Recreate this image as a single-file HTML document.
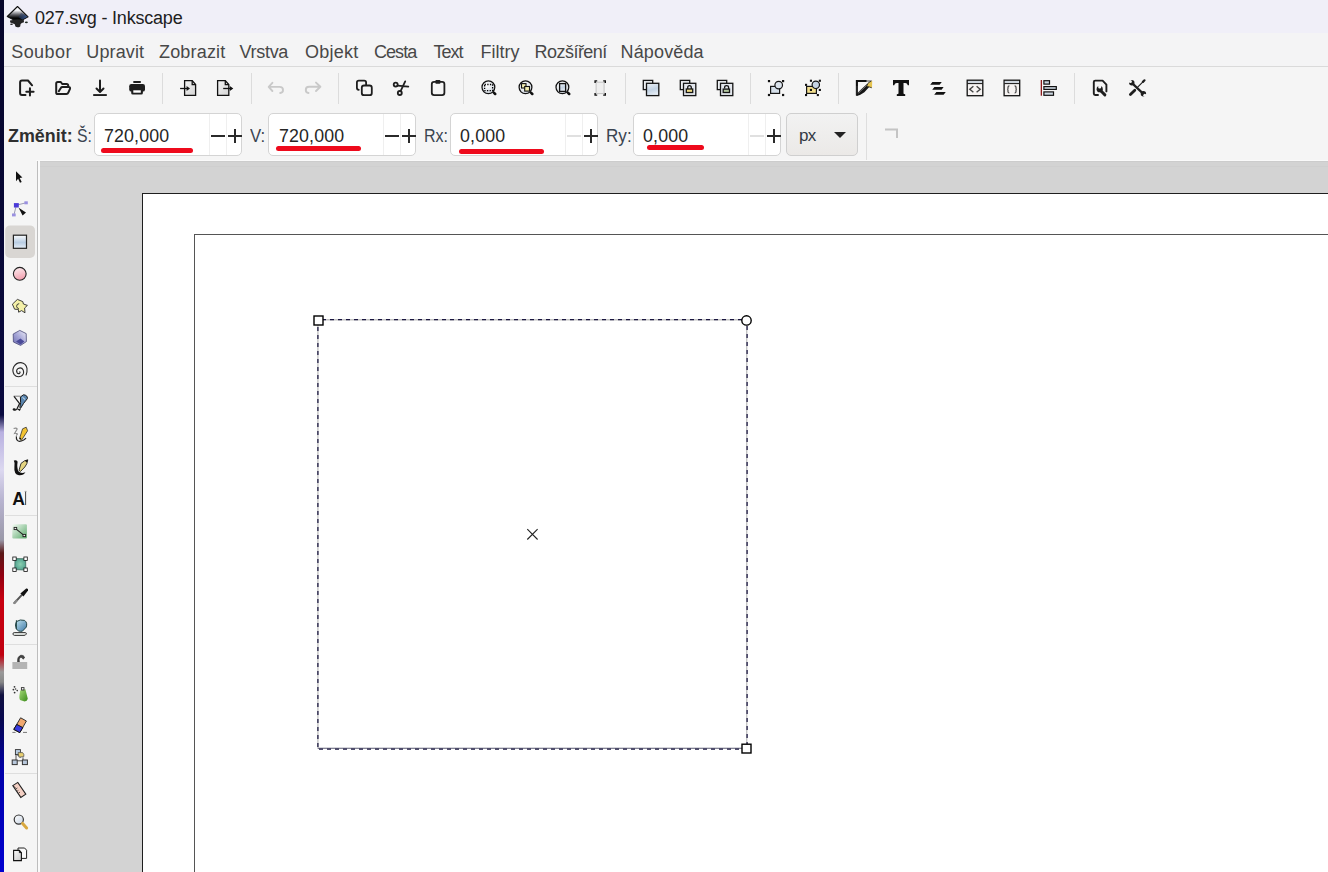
<!DOCTYPE html>
<html><head><meta charset="utf-8">
<style>
*{margin:0;padding:0;box-sizing:border-box}
html,body{width:1328px;height:872px;overflow:hidden;background:#f5f5f5;font-family:"Liberation Sans",sans-serif}
.a{position:absolute}
.t{position:absolute;white-space:nowrap;line-height:1}
svg{position:absolute;overflow:visible}
.ent{width:148px;height:43px;border:1px solid #d4d4d4;border-radius:5px;background:#fff}
.ent .s1{position:absolute;left:114px;top:0;width:1px;height:41px;background:#efefef}
.ent .s2{position:absolute;left:131px;top:0;width:1px;height:41px;background:#efefef}
.ent .mi{position:absolute;left:116px;top:21px;width:14px;height:1.7px;background:#2a2a2a}
.ent .mi.dis{background:#e0e0e0}
.ent .pl{position:absolute;left:133px;top:21px;width:14px;height:1.7px;background:#2a2a2a}
.ent .pl2{position:absolute;left:139.2px;top:14.8px;width:1.7px;height:14px;background:#2a2a2a}
.num{font-size:17.8px;color:#262626;letter-spacing:0.15px}
.red{height:5px;border-radius:3px;background:#ee0a1c}
</style></head><body>
<!-- desktop strip -->
<div class="a" style="left:0;top:0;width:4px;height:872px;background:linear-gradient(#06062a 0px,#0a0a40 415px,#b8b0e0 432px,#dcd8f0 470px,#b8b4d0 500px,#9a98a8 540px,#5a1818 553px,#900010 575px,#c80010 600px,#c00010 655px,#9a9a9a 672px,#888 682px,#101040 695px,#080850 720px,#0000a8 770px,#0000d0 872px)"></div>
<!-- title bar -->
<div class="a" style="left:4px;top:0;width:1324px;height:33px;background:#f0eff8"></div>
<div class="a" style="left:4px;top:33px;width:1324px;height:33px;background:#f4f4f5"></div>
<div class="a" style="left:4px;top:66px;width:1324px;height:1px;background:#dadada"></div>
<div class="t" style="left:35px;top:8.5px;font-size:18px;letter-spacing:-0.2px;color:#202020">027.svg - Inkscape</div>
<!-- menu -->
<div id="menu" style="color:#484848;font-size:18px">
<div class="t" style="left:11.2px;top:43px;letter-spacing:0.45px">Soubor</div>
<div class="t" style="left:86.3px;top:43px;letter-spacing:0.13px">Upravit</div>
<div class="t" style="left:159.0px;top:43px;letter-spacing:0.18px">Zobrazit</div>
<div class="t" style="left:239.6px;top:43px;letter-spacing:-0.32px">Vrstva</div>
<div class="t" style="left:305.0px;top:43px;letter-spacing:0.26px">Objekt</div>
<div class="t" style="left:373.9px;top:43px;letter-spacing:-0.92px">Cesta</div>
<div class="t" style="left:433.5px;top:43px;letter-spacing:-1.04px">Text</div>
<div class="t" style="left:480.4px;top:43px;letter-spacing:0.01px">Filtry</div>
<div class="t" style="left:534.6px;top:43px;letter-spacing:-0.54px">Rozšíření</div>
<div class="t" style="left:620.5px;top:43px;letter-spacing:0.15px">Nápověda</div>
</div>
<!-- toolbar separators row1 -->
<div class="a" style="left:162px;top:73px;width:1px;height:31px;background:#dcdcdc"></div>
<div class="a" style="left:251px;top:73px;width:1px;height:31px;background:#dcdcdc"></div>
<div class="a" style="left:338px;top:73px;width:1px;height:31px;background:#dcdcdc"></div>
<div class="a" style="left:463px;top:73px;width:1px;height:31px;background:#dcdcdc"></div>
<div class="a" style="left:625px;top:73px;width:1px;height:31px;background:#dcdcdc"></div>
<div class="a" style="left:750px;top:73px;width:1px;height:31px;background:#dcdcdc"></div>
<div class="a" style="left:838px;top:73px;width:1px;height:31px;background:#dcdcdc"></div>
<div class="a" style="left:1074px;top:73px;width:1px;height:31px;background:#dcdcdc"></div>

<!-- row 2 -->
<div class="t" style="left:8px;top:128px;font-size:17.9px;font-weight:bold;color:#2f2f2f">Změnit:</div>
<div class="t" style="left:77px;top:127px;font-size:18px;transform:scaleX(0.88);transform-origin:0 0;color:#3a4450">Š:</div>
<div class="t" style="left:250px;top:127px;font-size:18px;transform:scaleX(0.93);transform-origin:0 0;color:#3a4450">V:</div>
<div class="t" style="left:424px;top:127px;font-size:18px;transform:scaleX(0.89);transform-origin:0 0;color:#3a4450">Rx:</div>
<div class="t" style="left:606px;top:127px;font-size:18px;transform:scaleX(0.95);transform-origin:0 0;color:#3a4450">Ry:</div>
<div class="a ent" style="left:94px;top:113px"><div class="s1"></div><div class="s2"></div><div class="mi"></div><div class="pl"></div><div class="pl2"></div></div>
<div class="a ent" style="left:268px;top:113px"><div class="s1"></div><div class="s2"></div><div class="mi"></div><div class="pl"></div><div class="pl2"></div></div>
<div class="a ent" style="left:450px;top:113px"><div class="s1"></div><div class="s2"></div><div class="mi dis"></div><div class="pl"></div><div class="pl2"></div></div>
<div class="a ent" style="left:633px;top:113px"><div class="s1"></div><div class="s2"></div><div class="mi dis"></div><div class="pl"></div><div class="pl2"></div></div>
<div class="t num" style="left:104px;top:128px">720,000</div>
<div class="t num" style="left:279px;top:128px">720,000</div>
<div class="t num" style="left:460px;top:128px">0,000</div>
<div class="t num" style="left:643px;top:128px">0,000</div>
<div class="a red" style="left:101px;top:148px;width:92px"></div>
<div class="a red" style="left:276px;top:146px;width:85px"></div>
<div class="a red" style="left:459px;top:149px;width:85px"></div>
<div class="a red" style="left:647px;top:145px;width:57px"></div>
<div class="a" style="left:786px;top:113px;width:72px;height:43px;border:1px solid #cfcfcf;border-radius:5px;background:linear-gradient(#f2f2f2,#ebe9e7)"></div>
<div class="t" style="left:799px;top:127px;font-size:17px;letter-spacing:-0.6px;color:#333a44">px</div>
<svg style="left:834px;top:132px" width="12" height="7"><path d="M0 0H12L6 6Z" fill="#222"/></svg>
<div class="a" style="left:866px;top:113px;width:1px;height:47px;background:#dedede"></div>
<svg style="left:884px;top:128px" width="14" height="11"><path d="M1 1.5H13V10" fill="none" stroke="#c4c4c4" stroke-width="2"/></svg>
<!-- canvas -->
<div class="a" style="left:36px;top:160px;width:1292px;height:712px;background:#fafafa"></div>
<div class="a" style="left:4px;top:161px;width:33px;height:711px;background:#f5f5f5"></div>
<div class="a" style="left:37px;top:161px;width:1px;height:711px;background:#bdbdbd"></div>
<div class="a" style="left:40px;top:161px;width:1288px;height:711px;background:#d3d3d3"></div>
<div class="a" style="left:40px;top:161px;width:1288px;height:1px;background:#cccccc"></div>
<div class="a" style="left:40px;top:166px;width:1288px;height:1px;background:#cfcfcf"></div>
<div class="a" style="left:142px;top:193px;width:1200px;height:700px;background:#fff;border-left:1px solid #1e1e1e;border-top:1px solid #1e1e1e"></div>
<div class="a" style="left:194px;top:234px;width:1200px;height:700px;border-left:1px solid #555;border-top:1px solid #555"></div>

<svg class="a" style="left:0;top:0" width="1328" height="872" viewBox="0 0 1328 872">
<path d="M318 319.7 H747" stroke="#c4c4c4" stroke-width="1.5"/>
<path d="M317.9 320 V749" stroke="#c4c4c4" stroke-width="1.4"/>
<path d="M746.7 320 V749" stroke="#c4c4c4" stroke-width="1.4"/>
<path d="M318 748.3 H747" stroke="#5a5a70" stroke-width="1.1"/>
<g stroke="#1a1640" stroke-width="1.25" stroke-dasharray="4 4">
<path d="M314 319.5 H747"/>
<path d="M317.9 319 V749"/>
<path d="M747.1 318 V749"/>
<path d="M319 749.1 H747"/>
</g>
<rect x="314" y="316" width="9" height="9" fill="#fff" stroke="#000" stroke-width="1.4"/>
<rect x="742" y="744.2" width="9" height="8.8" fill="#fff" stroke="#000" stroke-width="1.4"/>
<circle cx="746.5" cy="320.45" r="4.7" fill="#fff" stroke="#000" stroke-width="1.4"/>
<path d="M527.3 529.2 L537.6 539.5 M537.6 529.2 L527.3 539.5" stroke="#222" stroke-width="1.1"/>
</svg>
<svg class="a" style="left:0;top:0" width="1328" height="872" viewBox="0 0 1328 872">
<defs>
<linearGradient id="gdoc" x1="0" y1="0" x2="1" y2="1"><stop offset="0" stop-color="#f4f4f4"/><stop offset="1" stop-color="#d4d4d4"/></linearGradient>
<linearGradient id="gblue" x1="0" y1="0" x2="0.3" y2="1"><stop offset="0" stop-color="#eef2f6"/><stop offset="0.6" stop-color="#c3d3e4"/><stop offset="1" stop-color="#e4ecf4"/></linearGradient>
<radialGradient id="glens" cx="0.4" cy="0.35" r="0.7"><stop offset="0" stop-color="#ffffff"/><stop offset="1" stop-color="#cfd6de"/></radialGradient>
<linearGradient id="gpink" x1="0" y1="0" x2="0.4" y2="1"><stop offset="0" stop-color="#fde8ec"/><stop offset="1" stop-color="#f3a9b6"/></linearGradient>
<linearGradient id="glogo" x1="0" y1="0" x2="0" y2="1"><stop offset="0" stop-color="#ffffff"/><stop offset="0.3" stop-color="#f0f0f4"/><stop offset="0.62" stop-color="#5a5a60"/><stop offset="0.85" stop-color="#050505"/><stop offset="1" stop-color="#000"/></linearGradient>
<linearGradient id="gblu" x1="0" y1="0" x2="1" y2="0.6"><stop offset="0" stop-color="#1a2a4a" stop-opacity="0.2"/><stop offset="1" stop-color="#3a5c9a"/></linearGradient>
</defs>
<!-- inkscape logo -->
<path d="M17.5 6.5 L28.1 16.8 L22.2 20 L13 19.4 L7.3 16.5 Z" fill="url(#glogo)" stroke="#101010" stroke-width="1.1" stroke-linejoin="round"/>
<path d="M21 12.4 L27.6 16.8 L22.2 19.6 L18.5 17.2 Z" fill="url(#gblu)"/>
<path d="M10 20.4 Q14 19.2 23.8 20 L24 22.2 Q21.4 22.6 20.6 24 L20.2 26.4 Q17.6 28 15.4 26.6 L14.8 24.2 Q12.4 23.4 10.2 22.6 Z" fill="#232323"/>
<ellipse cx="11.5" cy="24.3" rx="1.4" ry="0.8" fill="#222"/>
<ellipse cx="26.4" cy="22.3" rx="1.5" ry="0.9" fill="#1e2a22"/>
<!-- 1 new -->
<g fill="none" stroke="#1e1e1e" stroke-width="2" stroke-linecap="round" stroke-linejoin="round">
<path d="M25.5 95 H22 Q20.1 95 20.1 93 V82.5 Q20.1 80.5 22 80.5 H28 L32.1 85.3"/>
<path d="M26.3 91.8 H33.6 M29.95 88.2 V95.6"/>
<!-- 2 open -->
<path d="M68.2 86.8 V85.6 Q68.2 84 66.6 84 H62.2 L60.8 82 H57.8 Q56.2 82 56.2 83.6 V92.4 Q56.2 94 57.8 94 H66.4 Q67.8 94 68.3 92.7 L70 88.9 Q70.4 87 68.8 87 H62.4 Q61.3 87 60.8 87.9 L58.8 91.2"/>
<!-- 3 download -->
<path d="M100 80.5 V91.4 M96.5 88.5 L100 92 L103.5 88.5"/>
</g>
<rect x="93.2" y="94.1" width="13.6" height="1.9" fill="#1e1e1e"/>
<!-- 4 print -->
<g fill="#1e1e1e">
<rect x="133.2" y="81" width="7.7" height="1.9" rx="0.6"/>
<rect x="129.2" y="84" width="15.8" height="7.6" rx="2.2"/>
<rect x="131.2" y="88.5" width="11.7" height="6.1" rx="1.6"/>
</g>
<rect x="133.3" y="90.3" width="7.5" height="2.4" fill="#fff"/>
<!-- 5 import / 6 export -->
<g stroke="#111" stroke-width="1.3" stroke-linejoin="miter">
<path d="M184.6 80.6 H192.2 L195.6 84.6 V95.4 H184.6 Z" fill="url(#gdoc)"/>
<path d="M192.2 80.6 V84.6 H195.6" fill="none"/>
<path d="M180.1 88.5 H187.2" fill="none"/>
<path d="M217.6 80.6 H225.3 L228.8 84.6 V95.4 H217.6 Z" fill="url(#gdoc)"/>
<path d="M225.3 80.6 V84.6 H228.8" fill="none"/>
<path d="M223.2 88.5 H230.2" fill="none"/>
</g>
<path d="M186.6 85.9 L190 88.5 L186.6 91.1 Z M229.8 85.9 L233.3 88.5 L229.8 91.1 Z" fill="#111"/>
<!-- 7 undo / 8 redo -->
<g fill="none" stroke="#c9c9c9" stroke-width="1.9" stroke-linecap="round" stroke-linejoin="round">
<path d="M272.4 82.8 L268.7 86.9 L272.4 91 M268.7 86.9 H279.6 Q283 86.9 283 90 Q283 92.8 280.2 93"/>
<path d="M316 82.6 L320.4 86.8 L316 91 M320.4 86.8 H309 Q305.8 86.8 305.8 90 Q305.8 92.8 308.5 93"/>
</g>
<!-- 9 copy, 10 cut, 11 paste -->
<g fill="none" stroke="#1e1e1e" stroke-width="1.8" stroke-linecap="round" stroke-linejoin="round">
<path d="M358.8 89.8 Q356.9 89.8 356.9 87.8 V82.5 Q356.9 80.6 358.8 80.6 H364.2 Q366.1 80.6 366.1 82.5 V85"/>
<rect x="361.8" y="85.5" width="10" height="9.7" rx="2.3"/>
<circle cx="395.7" cy="84.6" r="2"/>
<circle cx="399.8" cy="93" r="2"/>
<path d="M397.7 85.6 L408.3 86.7 M405.2 81.4 L400.6 91.1"/>
<rect x="431.8" y="81.8" width="12.6" height="13.3" rx="2.3"/>
</g>
<rect x="435.4" y="80" width="5" height="3.8" rx="0.8" fill="#1e1e1e"/>
<!-- zoom icons -->
<g stroke="#111" stroke-width="1.25">
<circle cx="488.4" cy="87.3" r="6.4" fill="url(#glens)"/>
<circle cx="525.5" cy="87.3" r="6.4" fill="url(#glens)"/>
<circle cx="562.4" cy="87.3" r="6.4" fill="url(#glens)"/>
</g>
<g stroke="#111" stroke-width="2.5" stroke-linecap="round">
<path d="M493.8 92.6 L495.2 94 M530.9 92.6 L532.3 94 M567.8 92.6 L569.2 94"/>
</g>
<rect x="484.6" y="84.5" width="8" height="6.2" fill="none" stroke="#000" stroke-width="1.3" stroke-dasharray="1.3 1.35"/>
<rect x="521.5" y="83.6" width="4.5" height="4.4" fill="#f2eeb0" stroke="#111" stroke-width="1.1"/>
<rect x="524.7" y="86.5" width="4.8" height="4.6" fill="#f2eeb0" stroke="#111" stroke-width="1.1"/>
<rect x="559.6" y="83.6" width="6" height="7.8" fill="url(#gblue)" stroke="#111" stroke-width="1.3"/>
<!-- fit -->
<rect x="596.1" y="82.2" width="8" height="11.4" fill="#efefef" stroke="#c4c4c4" stroke-width="1"/>
<g fill="#111">
<path d="M594.4 80.2 H597.2 V81.6 H595.8 V83 H594.4 Z M606 80.2 H603.2 V81.6 H604.6 V83 H606 Z M594.4 95.8 H597.2 V94.4 H595.8 V93 H594.4 Z M606 95.8 H603.2 V94.4 H604.6 V93 H606 Z"/>
</g>
<!-- duplicate / clone / unlink -->
<g stroke="#151515" stroke-width="1.3">
<rect x="643.3" y="80.4" width="9.4" height="9.2" fill="#eef1f4"/>
<rect x="646.5" y="83.3" width="12.3" height="12.3" fill="url(#gblue)"/>
<rect x="680.3" y="80.4" width="9.4" height="9.2" fill="#eef1f4"/>
<rect x="683.5" y="83.3" width="12.3" height="12.3" fill="#e4e8ee"/>
<rect x="717.3" y="80.4" width="9.4" height="9.2" fill="#eef1f4"/>
<rect x="720.5" y="83.3" width="12.3" height="12.3" fill="#e4e8ee"/>
<path d="M687.7 89 V87.6 Q687.7 85.7 689.5 85.7 Q691.3 85.7 691.3 87.6 V89" fill="none"/>
<rect x="686.3" y="89" width="6.4" height="3.5" fill="#efdc84"/>
<path d="M724.6 88.6 V87.4 Q724.6 85.6 726.6 85.6 Q728.6 85.6 728.6 87.4 V89" fill="none"/>
<rect x="723.2" y="89.1" width="6.3" height="3.4" fill="#b4c8a0"/>
</g>
<!-- group / ungroup -->
<g stroke="#151515" stroke-width="1.2">
<rect x="770.6" y="86.4" width="9" height="7" fill="#d6e0ea"/>
<circle cx="778.7" cy="85.1" r="3.8" fill="#dbe3ec"/>
<rect x="806.6" y="86.4" width="9.8" height="7" fill="#f3df8e"/>
<circle cx="815.8" cy="84.8" r="3.7" fill="#c6d3e3"/>
</g>
<g fill="#111">
<rect x="767.9" y="80" width="2.2" height="2.2"/><rect x="782" y="80" width="2.2" height="2.2"/>
<rect x="767.9" y="93.9" width="2.2" height="2.2"/><rect x="782" y="93.9" width="2.2" height="2.2"/>
<rect x="809.9" y="79.7" width="2.1" height="2.1"/><rect x="818.8" y="79.7" width="2.1" height="2.1"/>
<rect x="805" y="83.8" width="2.1" height="2.1"/><rect x="818.8" y="88.9" width="2.1" height="2.1"/>
<rect x="809.9" y="88.9" width="2.1" height="2.1"/><rect x="805" y="94" width="2.1" height="2.1"/>
<rect x="816.8" y="94" width="2.1" height="2.1"/>
</g>
<!-- fill & stroke -->
<path d="M856.9 95.5 V81 H867" fill="none" stroke="#111" stroke-width="2.1"/>
<path d="M866 81 H871.5" fill="none" stroke="#777" stroke-width="1.4"/>
<path d="M857 86 V95" fill="none" stroke="#555" stroke-width="1" opacity="0.6"/>
<path d="M856 96 Q857.5 92.4 861 89.6 L868.6 82.6 L871 85 L864.4 92.2 Q861 95 856 96 Z" fill="#151515"/>
<path d="M858.4 93.2 L866.6 85.4" stroke="#9a9a9a" stroke-width="0.7"/>
<path d="M868.8 82.4 L872.2 80.8 L872 87.8 L866.8 86.4 Z" fill="#e6c450"/>
<path d="M868.4 82.8 L871.4 81 M867 86.2 L871.8 87.8" stroke="#222" stroke-width="0.8"/>
<!-- T -->
<path d="M893 80 H909 V85.2 H907.8 Q907.2 83 905.2 83 H903.5 V93.4 Q903.8 94.2 905.2 94.2 V96 H896.8 V94.2 Q898.2 94.2 898.5 93.4 V83 H896.8 Q894.8 83 894.2 85.2 H893 Z" fill="#111"/>
<!-- layers -->
<path d="M932.4 82 H941.8 L939.6 84.7 H930.2 Z M934.4 87 H943.6 L941.6 89.8 H932.2 Z M936.4 92 H945.8 L943.6 94.7 H934.2 Z" fill="#111"/>
<!-- xml / css -->
<g stroke="#111" stroke-width="1.3">
<rect x="967.2" y="80.2" width="15.6" height="15.5" fill="#f6f3f2"/>
<rect x="1004.1" y="80.2" width="15.6" height="15.5" fill="#f6f3f2"/>
</g>
<rect x="968" y="81" width="14" height="2" fill="#cfd6de"/>
<rect x="1004.9" y="81" width="14" height="2" fill="#cfd6de"/>
<path d="M967.5 83.6 H982.5 M1004.4 83.6 H1019.4" stroke="#111" stroke-width="1"/>
<path d="M973.4 86.2 L969.8 89.2 L973.4 92.2 M976.6 86.2 L980.2 89.2 L976.6 92.2" fill="none" stroke="#444" stroke-width="1.4"/>
<path d="M1009.4 85.8 Q1008 85.8 1008 87 V88.2 Q1008 89.3 1007.2 89.3 Q1008 89.3 1008 90.4 V91.8 Q1008 93 1009.4 93 M1014.6 85.8 Q1016 85.8 1016 87 V88.2 Q1016 89.3 1016.8 89.3 Q1016 89.3 1016 90.4 V91.8 Q1016 93 1014.6 93" fill="none" stroke="#444" stroke-width="1.2"/>
<!-- align -->
<rect x="1040.7" y="80" width="1.3" height="15.7" fill="#8c1c1c"/>
<g stroke="#111" stroke-width="1.2" fill="#cdd7e2">
<rect x="1043.9" y="80.7" width="5.6" height="3.4"/>
<rect x="1043.9" y="86.6" width="12.4" height="2.8"/>
<rect x="1043.9" y="91.9" width="9.6" height="3.4"/>
</g>
<!-- doc props -->
<path d="M1098 95 H1095.2 Q1093.8 95 1093.8 93.6 V82 Q1093.8 80.6 1095.2 80.6 H1102.6 L1106.4 84.6 V91.4" fill="none" stroke="#1e1e1e" stroke-width="1.9" stroke-linejoin="round" stroke-linecap="round"/>
<path d="M1101 91 L1104.9 94.9" stroke="#1e1e1e" stroke-width="2.9" stroke-linecap="round"/>
<circle cx="1099.7" cy="89.2" r="3.1" fill="#1e1e1e"/>
<circle cx="1099.7" cy="86.9" r="1.55" fill="#f5f5f5"/>
<path d="M1098.1 86.9 V88.6 M1101.3 86.9 V88.6" stroke="#f5f5f5" stroke-width="0.01"/>
<!-- prefs -->
<path d="M1132.6 83.6 L1142.8 93.4" stroke="#1e1e1e" stroke-width="2.2"/>
<circle cx="1131.8" cy="82.8" r="2.7" fill="#1e1e1e"/>
<circle cx="1143.4" cy="93.8" r="2.7" fill="#1e1e1e"/>
<circle cx="1130.4" cy="81.4" r="1.5" fill="#f5f5f5"/>
<circle cx="1144.8" cy="95.2" r="1.5" fill="#f5f5f5"/>
<path d="M1136.4 88.4 L1143.4 81.4" stroke="#1e1e1e" stroke-width="1.2"/>
<path d="M1142.9 81.9 L1144.5 80.3" stroke="#1e1e1e" stroke-width="2.2" stroke-linecap="round"/>
<path d="M1130.4 94.6 L1134.8 90.2" stroke="#1e1e1e" stroke-width="2.8" stroke-linecap="round"/>
</svg>
<svg class="a" style="left:0;top:0" width="1328" height="872" viewBox="0 0 1328 872">
<defs>
<linearGradient id="grect" x1="0" y1="0" x2="0" y2="1"><stop offset="0" stop-color="#fbfcfd"/><stop offset="0.55" stop-color="#b9cde3"/><stop offset="1" stop-color="#e6eef6"/></linearGradient>
<linearGradient id="gpk" x1="0" y1="0" x2="0.3" y2="1"><stop offset="0" stop-color="#fdf2f4"/><stop offset="1" stop-color="#f3a3b2"/></linearGradient>
<linearGradient id="gbox" x1="1" y1="0" x2="0" y2="1"><stop offset="0" stop-color="#f0f0f8"/><stop offset="0.5" stop-color="#a8a8d8"/><stop offset="1" stop-color="#6a6ab0"/></linearGradient>
<linearGradient id="ggrad" x1="0" y1="0" x2="1" y2="1"><stop offset="0" stop-color="#f4fbf4"/><stop offset="1" stop-color="#5aa86a"/></linearGradient>
<radialGradient id="gmesh" cx="0.5" cy="0.5" r="0.6"><stop offset="0" stop-color="#8ad0b0"/><stop offset="1" stop-color="#4a9a8a"/></radialGradient>
<linearGradient id="gbucket" x1="0" y1="0" x2="1" y2="1"><stop offset="0" stop-color="#bfe4ee"/><stop offset="1" stop-color="#3f78a8"/></linearGradient>
<linearGradient id="gspray" x1="0" y1="0" x2="1" y2="1"><stop offset="0" stop-color="#a8dc7a"/><stop offset="1" stop-color="#3a8a1a"/></linearGradient>
<linearGradient id="gmag" x1="0" y1="0" x2="1" y2="1"><stop offset="0" stop-color="#fff"/><stop offset="1" stop-color="#c8d4e4"/></linearGradient>
<linearGradient id="gpg" x1="0" y1="0" x2="1" y2="1"><stop offset="0" stop-color="#fafafa"/><stop offset="1" stop-color="#c8c8c8"/></linearGradient>
</defs>
<!-- arrow -->
<path d="M16 171.3 L22.4 177.6 L19.7 177.9 L21.7 182 L20 182.8 L18.1 178.8 L16 181.2 Z" fill="#111"/>
<!-- node -->
<path d="M16.4 205.2 L26 202.8 M16.4 205.2 L13.9 215" stroke="#9a9ab4" stroke-width="1"/>
<rect x="13.9" y="203.1" width="4.9" height="4.4" fill="#4a3ad8"/>
<rect x="24.4" y="201.3" width="3.4" height="3" fill="#9a90e0"/>
<rect x="12" y="213.5" width="3.7" height="2.9" fill="#9a90e0"/>
<path d="M18.6 207.8 L26 212.4 L22.6 215.4 Z" fill="#111"/>
<!-- rect (active) -->
<rect x="5.2" y="225.4" width="29.8" height="32.6" rx="5" fill="#d9d6d3"/>
<rect x="13.4" y="235.2" width="13.1" height="13.1" fill="url(#grect)" stroke="#222" stroke-width="1.2"/>
<!-- circle -->
<circle cx="19.75" cy="273.8" r="6.4" fill="url(#gpk)" stroke="#222" stroke-width="1.1"/>
<!-- star -->
<path d="M17.4 299.4 L22.8 301.6 L23.4 304 L27.4 305.4 L24.6 308 L25 312.8 L21.6 310.6 L18.6 312.2 L18.4 309.4 L14.6 309.2 L12.4 304.2 Z" fill="#f4f0a8" stroke="#2a2a2a" stroke-width="0.9" stroke-linejoin="round"/>
<path d="M19.2 303.6 Q16.4 304 16.6 306.4 Q17 308.4 18.8 308.6" fill="none" stroke="#2a2a2a" stroke-width="0.9"/>
<!-- 3d box -->
<path d="M19.8 330.4 L26.2 333.6 L26.4 341.6 L20.6 345.4 L13.4 342 L13.2 334 Z" fill="url(#gbox)" stroke="#4a4a7a" stroke-width="0.8"/>
<path d="M16 341.4 L20.4 338.6 L24.4 341.6 L20.6 344.4 Z" fill="#4a4a98"/>
<!-- spiral -->
<path d="M19.6 371.4 Q20.6 372.4 19.6 373.4 Q18 374.2 17 372.6 Q15.8 370 18.2 368.4 Q21.6 366.8 23.2 370 Q24.6 374 21.4 376 Q17 378 14.2 374.6 Q11.8 371 13.8 366.8 Q16.4 362.4 21 362.6 Q26 363.2 27 368.4 Q27.4 372 26 375.4" fill="none" stroke="#2a2a2a" stroke-width="1.1"/>
<!-- sep -->
<rect x="5" y="386" width="32" height="1" fill="#dedede"/>
<!-- bezier -->
<path d="M13.6 396.2 H20.6" stroke="#888" stroke-width="1.1"/>
<path d="M14 396.4 L19.6 403.6 L17 408.8 Q16 410.4 14.4 410 L13.2 409.4" fill="none" stroke="#1a1a1a" stroke-width="1.2"/>
<ellipse cx="14.2" cy="409.4" rx="1.6" ry="1.1" fill="#1a1a1a"/>
<path d="M17.4 408.8 L19.6 410.2 L20.4 408.6" fill="none" stroke="#1a1a1a" stroke-width="1.1"/>
<path d="M20.4 397 L23.4 394.8 Q27.6 395 27.4 398.6 L23.6 403.4 L20.6 408.2 L19.8 407.6 L20.6 402.6 Z" fill="#5a86b0" stroke="#1a1a1a" stroke-width="1"/>
<path d="M22.4 397.2 L25.2 399.6" stroke="#d8e8f4" stroke-width="1"/>
<!-- pencil -->
<path d="M13.6 428.6 Q16.6 427.4 17.2 429 L14.6 433.4 Q16.4 433 17.4 434 L16.2 435.6" fill="none" stroke="#8a8a8a" stroke-width="1.1"/>
<path d="M16.4 436.4 Q16 441 19.4 441.4 Q23.6 441.2 26 438" fill="none" stroke="#222" stroke-width="1.2"/>
<path d="M19.4 438.8 L22.6 428.8 L26.2 427.2 L27.6 430.8 L21.4 440.4 Z" fill="#f2c230" stroke="#333" stroke-width="0.8"/>
<path d="M19.4 438.8 L20.6 437.4 L21.6 439.6 Z" fill="#111"/>
<!-- calligraphy -->
<path d="M13.8 460.6 Q17.2 459.4 17.6 461.8 Q16.6 468 18.6 471.6 Q21.4 474 25.4 472.2 Q23.6 475.6 19 475.2 Q13.6 474.4 14.4 467 Q15 462.4 13.8 460.6 Z" fill="#111"/>
<path d="M19 470.4 L21 463.4 L24.6 460.8 L27.8 459.8 L26.8 463.8 L24.8 467 L20.6 471.4 Z" fill="#e4d480" stroke="#222" stroke-width="0.9"/>
<path d="M24.6 460.8 L27.8 459.8 L27 462.6 Z" fill="#111"/>
<!-- text A -->
<text x="12.2" y="505.2" font-family="Liberation Sans" font-weight="bold" font-size="17.5" fill="#111">A</text>
<path d="M25.6 491.6 V505" stroke="#333" stroke-width="0.9"/>
<path d="M24.6 491.4 H26.6" stroke="#999" stroke-width="0.8"/>
<!-- sep -->
<rect x="5" y="515" width="32" height="1" fill="#dedede"/>
<!-- gradient -->
<rect x="12.3" y="524.2" width="14.6" height="14.4" rx="1" fill="url(#ggrad)"/>
<path d="M15.6 528.6 L24 535.4" stroke="#222" stroke-width="1.1"/>
<rect x="14.1" y="527.4" width="2.6" height="2.2" fill="#eee" stroke="#222" stroke-width="0.9"/>
<rect x="23" y="534.4" width="2.6" height="2.2" fill="#eee" stroke="#222" stroke-width="0.9"/>
<!-- mesh -->
<path d="M15 558.6 L25.6 558.8 L25.8 570 L14.8 569.6 Z" fill="url(#gmesh)" stroke="#3a6a5a" stroke-width="0.8"/>
<g fill="#fff" stroke="#111" stroke-width="0.8">
<rect x="12.8" y="557" width="3.4" height="3.4"/><rect x="23.9" y="557" width="3.4" height="3.4"/>
<rect x="12.8" y="568" width="3.4" height="3.4"/><rect x="23.9" y="568" width="3.4" height="3.4"/>
</g>
<!-- dropper -->
<path d="M14.4 603 L21.4 595.4" stroke="#555" stroke-width="2" stroke-linecap="round"/>
<path d="M14.4 603 L16.6 600.6" stroke="#888" stroke-width="2.2" stroke-linecap="round"/>
<path d="M20.4 593.6 L26.2 588.6 Q28.6 588.2 28 590.6 L23.4 596.6 Z" fill="#111"/>
<!-- bucket -->
<path d="M16.4 621.6 Q20 619 24.6 620.4 Q27.8 622.8 26.2 627.2 L22.4 631.2 Q18 632 16.2 628.6 Q14.6 624.6 16.4 621.6 Z" fill="url(#gbucket)" stroke="#224444" stroke-width="1"/>
<path d="M16.4 620.2 V629" stroke="#224444" stroke-width="1"/>
<path d="M13 634.2 Q12.6 632.8 14.2 632.6 H25.4 Q26.8 632.8 26.2 634.2 Q25.6 635.4 24 635.4 H14.4 Q13.4 635.4 13 634.2 Z" fill="#e8ece8" stroke="#333" stroke-width="1"/>
<!-- sep -->
<rect x="5" y="644" width="32" height="1" fill="#dedede"/>
<!-- tweak -->
<rect x="12.4" y="662" width="14.8" height="7" fill="#b4b4b4"/>
<path d="M17.6 662 Q17 657 20.2 655.4 Q24 654.6 24.6 657.8 L23 659.2 Q22.6 657 20.4 657.4 Q18.6 658.4 19.4 662" fill="#444" stroke="#222" stroke-width="0.6"/>
<!-- spray -->
<g fill="#333"><circle cx="14.5" cy="686.8" r="0.9"/><circle cx="13.4" cy="689.6" r="0.9"/><circle cx="15.6" cy="689" r="0.8"/><circle cx="14.6" cy="692.6" r="0.9"/><circle cx="17.2" cy="690.6" r="0.8"/></g>
<path d="M20.2 690.4 L25.4 689.2 L27.8 698.8 Q27.2 701.4 24.6 701.4 L20 700 Q19 698.6 19.4 696 Z" fill="url(#gspray)"/>
<rect x="21.4" y="687.6" width="2.6" height="2.4" fill="none" stroke="#333" stroke-width="0.9"/>
<!-- eraser -->
<path d="M20.6 717.8 L26.4 721 L19.8 732.6 L13.8 729.4 Z" fill="#f0a870" stroke="#333" stroke-width="1"/>
<path d="M16.8 724.4 L22.8 727.6 L19.8 732.6 L13.8 729.4 Z" fill="#3a3ae0" stroke="#111" stroke-width="1"/>
<path d="M12.4 732.4 H15.6 M23 732.4 H27" stroke="#777" stroke-width="1"/>
<!-- connector -->
<path d="M16 754 L21 757.4 M16 754 V760.8 M23 757.4 V760.8 M13.6 760.8 H26.8" fill="none" stroke="#444" stroke-width="0.9"/>
<rect x="15.4" y="749.6" width="5" height="5" fill="#b8cce0" stroke="#333" stroke-width="0.9"/>
<path d="M18 752.6 L22.6 752.6 Q24.4 754 23.8 756.6 L19 757.2 Z" fill="#e8cf70" stroke="#555" stroke-width="0.8"/>
<rect x="12.2" y="760" width="5" height="4.6" fill="#b8c8dc" stroke="#333" stroke-width="1"/>
<rect x="22.4" y="760" width="5" height="4.6" fill="#b8c8dc" stroke="#333" stroke-width="1"/>
<!-- sep -->
<rect x="5" y="773" width="32" height="1" fill="#dedede"/>
<!-- measure -->
<path d="M12.8 785.6 L17.8 782.4 L25.8 794.2 L20.8 797.4 Z" fill="#f4d0c4" stroke="#222" stroke-width="1.1"/>
<path d="M14.4 786.6 L15.6 787.6 M15.8 789 L17.4 788 M17.2 791 L18.4 790.4 M18.6 793 L20 792.2" stroke="#333" stroke-width="0.8"/>
<!-- zoom -->
<circle cx="18.8" cy="819.6" r="4.6" fill="url(#gmag)" stroke="#333" stroke-width="1.2"/>
<path d="M22.6 823.4 L26.6 828" stroke="#d8a840" stroke-width="3" stroke-linecap="round"/>
<!-- pages -->
<path d="M18 848 H24.6 L26.6 850.2 V858.4 H18 Z" fill="#fafafa" stroke="#222" stroke-width="1"/>
<path d="M13.6 850.4 H19.4 L21.4 852.6 V860.6 H13.6 Z" fill="url(#gpg)" stroke="#111" stroke-width="1.1"/>
<path d="M19.4 850.4 V852.6 H21.4" fill="none" stroke="#111" stroke-width="1"/>
</svg>
</body></html>
